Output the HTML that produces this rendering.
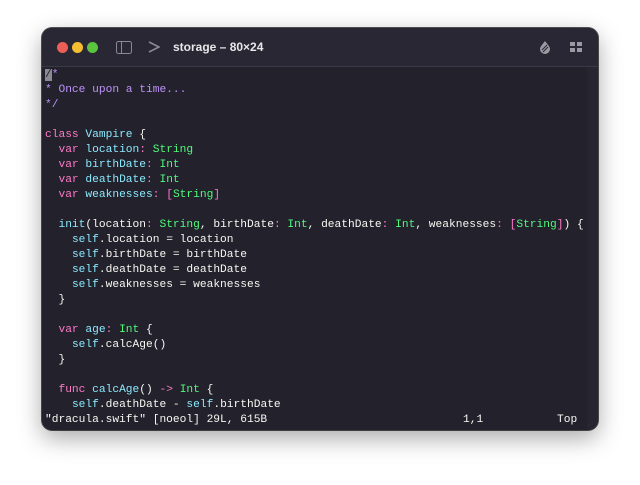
<!DOCTYPE html>
<html><head><style>
body{margin:0;width:640px;height:485px;background:#fff;overflow:hidden;position:relative}
.win{position:absolute;left:42px;top:28px;width:556px;height:402px;background:#22212c;border-radius:10px;box-shadow:0 8px 24px rgba(0,0,0,.35),0 0 0 1px #555;overflow:hidden}
.tb{position:absolute;left:0;top:0;width:556px;height:38px;background:#282733;border-bottom:1px solid #3a3946}
.d{position:absolute;top:14px;width:11px;height:11px;border-radius:50%}
.title{position:absolute;left:131px;top:12px;font:bold 12px "Liberation Sans",sans-serif;color:#e8e8ea}
pre{position:absolute;left:3px;top:40px;margin:0;font:11.23px/15px "Liberation Mono",monospace;color:#f8f8f2}
.k{color:#ff79c6}.c{color:#8be9fd}.t{color:#50fa7b}.m{color:#bd93f9}
.sb{position:absolute;right:0;top:39px;width:11px;height:363px;background:#262530}
.st{position:absolute;top:385px;font:11.23px/15px "Liberation Mono",monospace;color:#f8f8f2}
</style></head><body>
<div class="win">
<div class="tb">
<div class="d" style="left:15px;background:#ed5f56"></div>
<div class="d" style="left:30px;background:#f5bd30"></div>
<div class="d" style="left:45px;background:#5bc43f"></div>
<svg style="position:absolute;left:74px;top:13px" width="16" height="13"><rect x="0.5" y="0.5" width="15" height="12" rx="2" fill="none" stroke="#8a8a92"/><line x1="5.5" y1="1" x2="5.5" y2="12" stroke="#8a8a92"/></svg>
<svg style="position:absolute;left:106px;top:13px" width="12" height="12"><path d="M1 1 L11 6 L1 11" fill="none" stroke="#8a8a92" stroke-width="1.6"/></svg>
<div class="title">storage – 80×24</div>
<svg style="position:absolute;left:497px;top:12px" width="12" height="14"><path d="M6 1 C3 5 1 7 1 9 A5 5 0 0 0 11 9 C11 7 9 5 6 1Z" fill="#9a9aa2"/><path d="M3 10 L8 5 M4 12 L9 7" stroke="#282733" stroke-width="1"/></svg>
<svg style="position:absolute;left:528px;top:14px" width="12" height="11"><rect x="0" y="0" width="5" height="4" fill="#9a9aa2"/><rect x="7" y="0" width="5" height="4" fill="#9a9aa2"/><rect x="0" y="6" width="5" height="4" fill="#9a9aa2"/><rect x="7" y="6" width="5" height="4" fill="#9a9aa2"/></svg>
</div>
<div class="sb"></div>
<pre><span class="m"><span style="background:#8a8a92;color:#22212c">/</span>*
* Once upon a time...
*/</span>

<span class="k">class</span> <span class="c">Vampire</span> {
  <span class="k">var</span> <span class="c">location</span><span class="k">:</span> <span class="t">String</span>
  <span class="k">var</span> <span class="c">birthDate</span><span class="k">:</span> <span class="t">Int</span>
  <span class="k">var</span> <span class="c">deathDate</span><span class="k">:</span> <span class="t">Int</span>
  <span class="k">var</span> <span class="c">weaknesses</span><span class="k">:</span> <span class="k">[</span><span class="t">String</span><span class="k">]</span>

  <span class="c">init</span>(location<span class="k">:</span> <span class="t">String</span>, birthDate<span class="k">:</span> <span class="t">Int</span>, deathDate<span class="k">:</span> <span class="t">Int</span>, weaknesses<span class="k">:</span> <span class="k">[</span><span class="t">String</span><span class="k">]</span>) {
    <span class="c">self</span>.location = location
    <span class="c">self</span>.birthDate = birthDate
    <span class="c">self</span>.deathDate = deathDate
    <span class="c">self</span>.weaknesses = weaknesses
  }

  <span class="k">var</span> <span class="c">age</span><span class="k">:</span> <span class="t">Int</span> {
    <span class="c">self</span>.calcAge()
  }

  <span class="k">func</span> <span class="c">calcAge</span>() <span class="k">-&gt;</span> <span class="t">Int</span> {
    <span class="c">self</span>.deathDate - <span class="c">self</span>.birthDate
"dracula.swift" [noeol] 29L, 615B</pre>
<div class="st" style="left:421px">1,1</div>
<div class="st" style="left:515px">Top</div>
</div>
</body></html>
